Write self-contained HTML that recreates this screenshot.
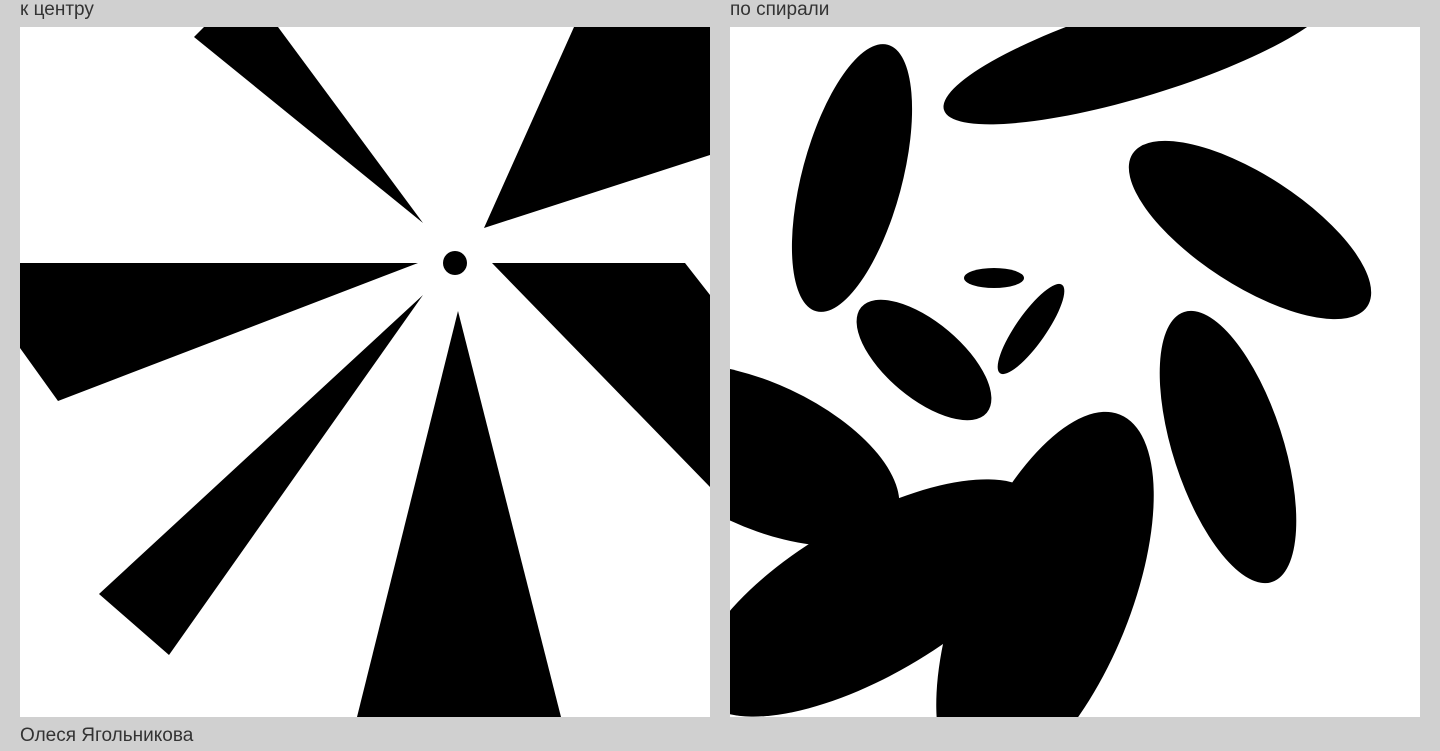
<!DOCTYPE html>
<html><head><meta charset="utf-8"><style>
body{margin:0;width:1440px;height:751px;background:#d0d0d0;position:relative;overflow:hidden;font-family:"Liberation Sans",sans-serif;color:#333;font-size:19px}
.t{position:absolute;line-height:20px}
svg{position:absolute;top:27px;background:#fff}
</style></head><body>
<div class="t" style="left:20px;top:0">к центру</div>
<div class="t" style="left:730px;top:0">по спирали</div>
<div class="t" style="left:20px;top:726px">Олеся Ягольникова</div>
<svg style="left:20px" width="690" height="690" viewBox="20 27 690 690">
<polygon points="194,37 204,27 278,27 423,223"/>
<polygon points="574,27 710,27 710,155 484,228"/>
<polygon points="20,263 418,263 58,401 20,348"/>
<polygon points="492,263 685,263 710,295 710,487"/>
<polygon points="423,295 99,594 169,655"/>
<polygon points="458,311 357,717 561,717"/>
<circle cx="455" cy="263" r="12"/>
</svg>
<svg style="left:730px" width="690" height="690" viewBox="730 27 690 690">
<ellipse cx="852" cy="178" rx="50" ry="138" transform="rotate(15 852 178)"/>
<ellipse cx="1140" cy="50" rx="205" ry="46" transform="rotate(-17 1140 50)"/>
<ellipse cx="1250" cy="230" rx="140" ry="55" transform="rotate(33 1250 230)"/>
<ellipse cx="994" cy="278" rx="30" ry="10"/>
<ellipse cx="1031" cy="329" rx="15" ry="54" transform="rotate(35 1031 329)"/>
<ellipse cx="924" cy="360" rx="82" ry="38" transform="rotate(40 924 360)"/>
<ellipse cx="1228" cy="447" rx="55" ry="142" transform="rotate(-18 1228 447)"/>
<ellipse cx="760" cy="455" rx="150" ry="72" transform="rotate(25 760 455)"/>
<ellipse cx="1045" cy="600" rx="85" ry="200" transform="rotate(22 1045 600)"/>
<ellipse cx="870" cy="598" rx="195" ry="78" transform="rotate(-30 870 598)"/>
</svg>
</body></html>
